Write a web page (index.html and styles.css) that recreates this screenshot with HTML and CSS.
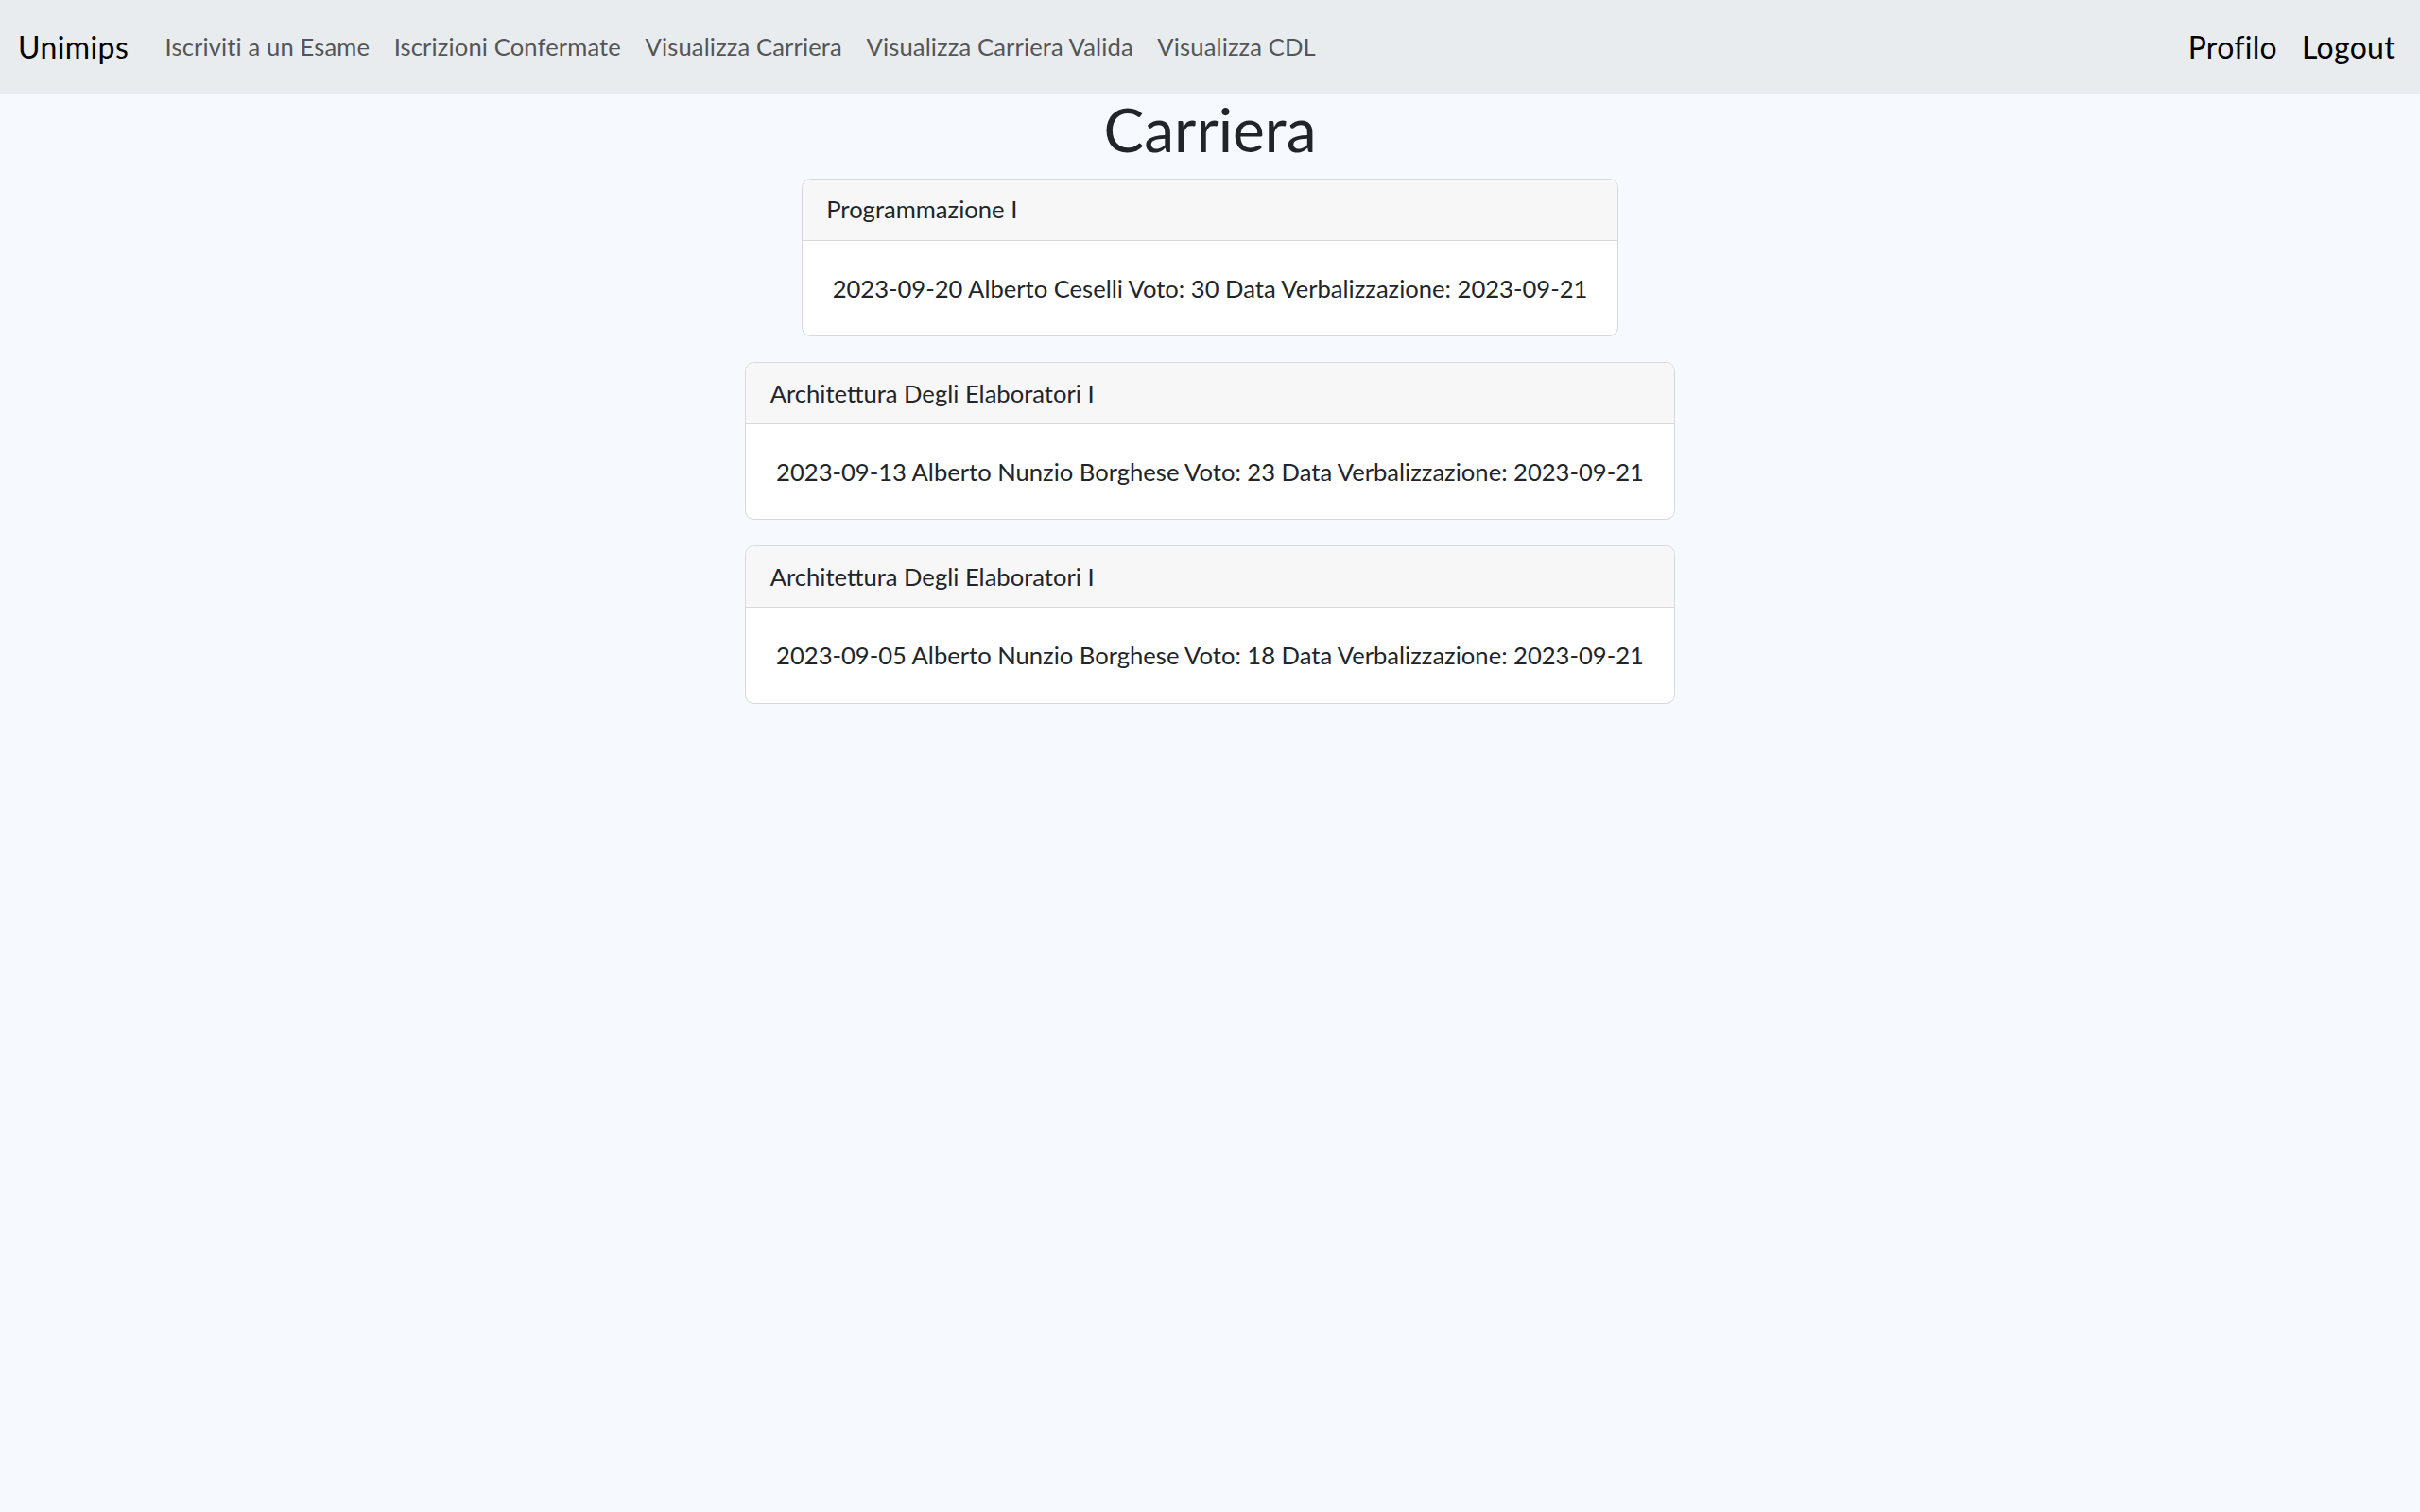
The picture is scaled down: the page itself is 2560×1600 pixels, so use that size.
FILE: index.html
```html
<!DOCTYPE html>
<html lang="it">
<head>
<meta charset="utf-8">
<title>Carriera</title>
<link rel="stylesheet" href="styles.css">
</head>
<body>
<nav class="navbar">
  <div class="nav-left">
    <a class="brand" href="#">Unimips</a>
    <ul class="nav-links">
      <li><a href="#">Iscriviti a un Esame</a></li>
      <li><a href="#">Iscrizioni Confermate</a></li>
      <li><a href="#">Visualizza Carriera</a></li>
      <li><a href="#">Visualizza Carriera Valida</a></li>
      <li><a href="#">Visualizza CDL</a></li>
    </ul>
  </div>
  <div class="nav-right">
    <a href="#">Profilo</a>
    <a href="#">Logout</a>
  </div>
</nav>
<main class="content">
  <h1 class="title">Carriera</h1>
  <div class="card">
    <div class="card-header">Programmazione I</div>
    <div class="card-body">2023-09-20 Alberto Ceselli Voto: 30 Data Verbalizzazione: 2023-09-21</div>
  </div>
  <div class="card">
    <div class="card-header">Architettura Degli Elaboratori I</div>
    <div class="card-body">2023-09-13 Alberto Nunzio Borghese Voto: 23 Data Verbalizzazione: 2023-09-21</div>
  </div>
  <div class="card">
    <div class="card-header">Architettura Degli Elaboratori I</div>
    <div class="card-body">2023-09-05 Alberto Nunzio Borghese Voto: 18 Data Verbalizzazione: 2023-09-21</div>
  </div>
</main>
</body>
</html>
```
FILE: styles.css
```css
* { box-sizing: border-box; }
html, body { margin: 0; padding: 0; }
body {
  background: #f6f9fd;
  font-family: Lato, "Noto Sans", sans-serif;
  font-size: 25.6px;
  line-height: 1.5;
  color: #212529;
  min-height: 1600px;
}
a { text-decoration: none; }
.navbar {
  height: 99px;
  background: #e8ecef;
  display: flex;
  align-items: center;
  justify-content: space-between;
  padding: 0 26px 0 19px;
}
.nav-left { display: flex; align-items: center; }
.brand {
  font-size: 32px;
  letter-spacing: 0.4px;
  color: #000;
  margin-right: 25.6px;
}
.nav-links {
  list-style: none;
  margin: 0;
  padding: 0;
  display: flex;
}
.nav-links a {
  display: block;
  padding: 0 12.8px;
  color: #545557;
  font-size: 25.6px;
  letter-spacing: 0.12px;
}
.nav-right { display: flex; gap: 26px; }
.nav-right a { color: #000; font-size: 32px; letter-spacing: 0.3px; }
.content {
  display: flex;
  flex-direction: column;
  align-items: center;
}
.title {
  font-size: 64px;
  font-weight: 400;
  line-height: 1.2;
  margin: 0 0 12.8px;
}
.card {
  background: #fff;
  border: 1px solid #d6d8db;
  border-radius: 9.6px;
  margin-bottom: 27px;
  overflow: hidden;
}
.card-header {
  background: #f7f7f7;
  border-bottom: 1px solid #d6d8db;
  padding: 12.8px 25.6px;
}
.card-body {
  padding: 31px 32px;
  text-align: center;
  white-space: nowrap;
}
```
